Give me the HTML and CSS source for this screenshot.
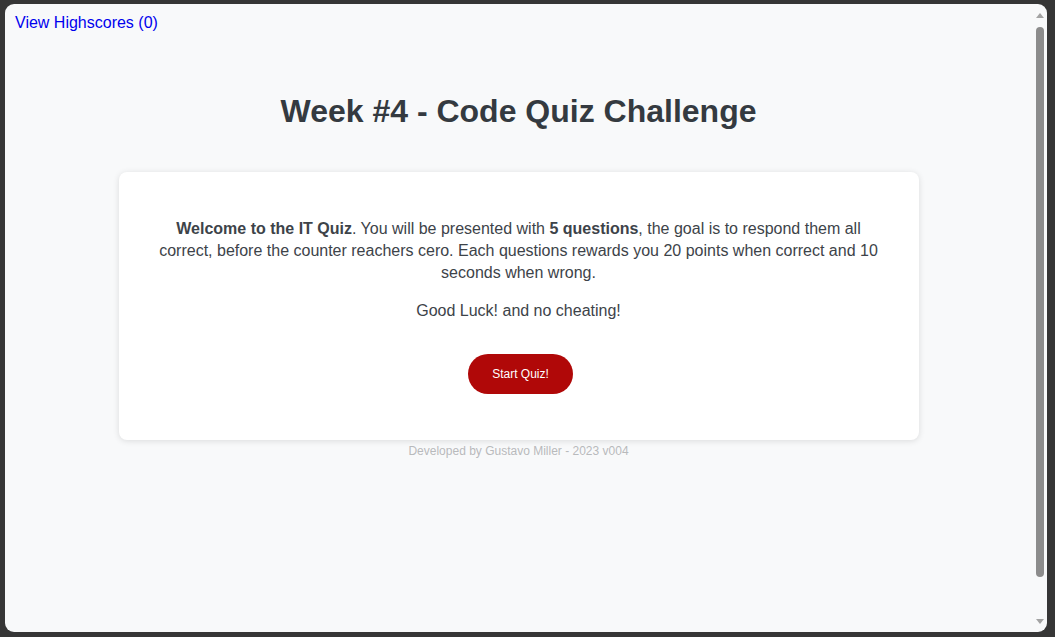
FILE: index.html
```html
<!DOCTYPE html>
<html lang="en">
<head>
<meta charset="utf-8">
<title>Code Quiz Challenge</title>
<link rel="stylesheet" href="styles.css">
</head>
<body>
<div class="window">
  <div class="page">
    <header class="topbar">
      <a class="highscores" href="#">View Highscores (0)</a>
    </header>
    <h1 class="title">Week #4 - Code Quiz Challenge</h1>
    <section class="card">
      <p class="intro"><strong>Welcome to the IT Quiz</strong>. You will be presented with <strong>5 questions</strong>, the goal is to respond them all correct, before the counter reachers cero. Each questions rewards you 20 points when correct and 10 seconds when wrong.</p>
      <p class="luck">Good Luck! and no cheating!</p>
      <button class="start" type="button">Start Quiz!</button>
    </section>
    <footer class="credits">Developed by Gustavo Miller - 2023 v004</footer>
  </div>
  <div class="scrollbar">
    <span class="arrow up"></span>
    <span class="thumb"></span>
    <span class="arrow down"></span>
  </div>
</div>
</body>
</html>
```
FILE: styles.css
```css
html, body {
  margin: 0;
  padding: 0;
  height: 100%;
}
body {
  background: #363636;
  font-family: "Liberation Sans", Arial, sans-serif;
  padding: 4px 8px 5px 5px;
  box-sizing: border-box;
}
.window {
  position: relative;
  height: 100%;
  background: #f8f9fa;
  border-radius: 9px;
  overflow: hidden;
  display: flex;
}
.page {
  flex: 1;
  display: flex;
  flex-direction: column;
  align-items: center;
}
.topbar {
  align-self: stretch;
  padding: 10px 10px 0;
}
.highscores {
  color: #0000ee;
  text-decoration: none;
  font-size: 16px;
  line-height: 18px;
}
.title {
  margin: 61px 0 42px;
  font-size: 32px;
  line-height: 37px;
  font-weight: bold;
  color: #343a40;
}
.card {
  width: 800px;
  box-sizing: border-box;
  background: #ffffff;
  border-radius: 8px;
  box-shadow: 0 1px 6px rgba(0, 0, 0, 0.12);
  padding: 46px 40px 46px;
  display: flex;
  flex-direction: column;
  align-items: center;
  text-align: center;
  color: #3d4349;
}
.intro, .luck {
  margin: 0;
  font-size: 16px;
  line-height: 22px;
}
.luck {
  margin-top: 16px;
}
.start {
  margin: 32px 0 0 4px;
  width: 105px;
  height: 40px;
  border: none;
  border-radius: 20px;
  background: #b00808;
  color: #ffffff;
  font-family: "Liberation Sans", Arial, sans-serif;
  font-size: 12px;
  cursor: pointer;
}
.credits {
  margin-top: 4px;
  font-size: 12px;
  line-height: 14px;
  font-weight: normal;
  color: #b8babc;
}
.scrollbar {
  width: 15px;
  flex: none;
  display: flex;
  flex-direction: column;
  align-items: center;
  padding: 9px 0 8px;
  box-sizing: border-box;
}
.arrow {
  width: 0;
  height: 0;
  border-left: 4px solid transparent;
  border-right: 4px solid transparent;
}
.arrow.up {
  border-bottom: 5px solid #a3a3a3;
}
.arrow.down {
  border-top: 5px solid #a3a3a3;
}
.thumb {
  width: 8px;
  margin: 9px 0 42px;
  flex: 1;
  background: #8c8c8c;
  border-radius: 4px;
}
```
